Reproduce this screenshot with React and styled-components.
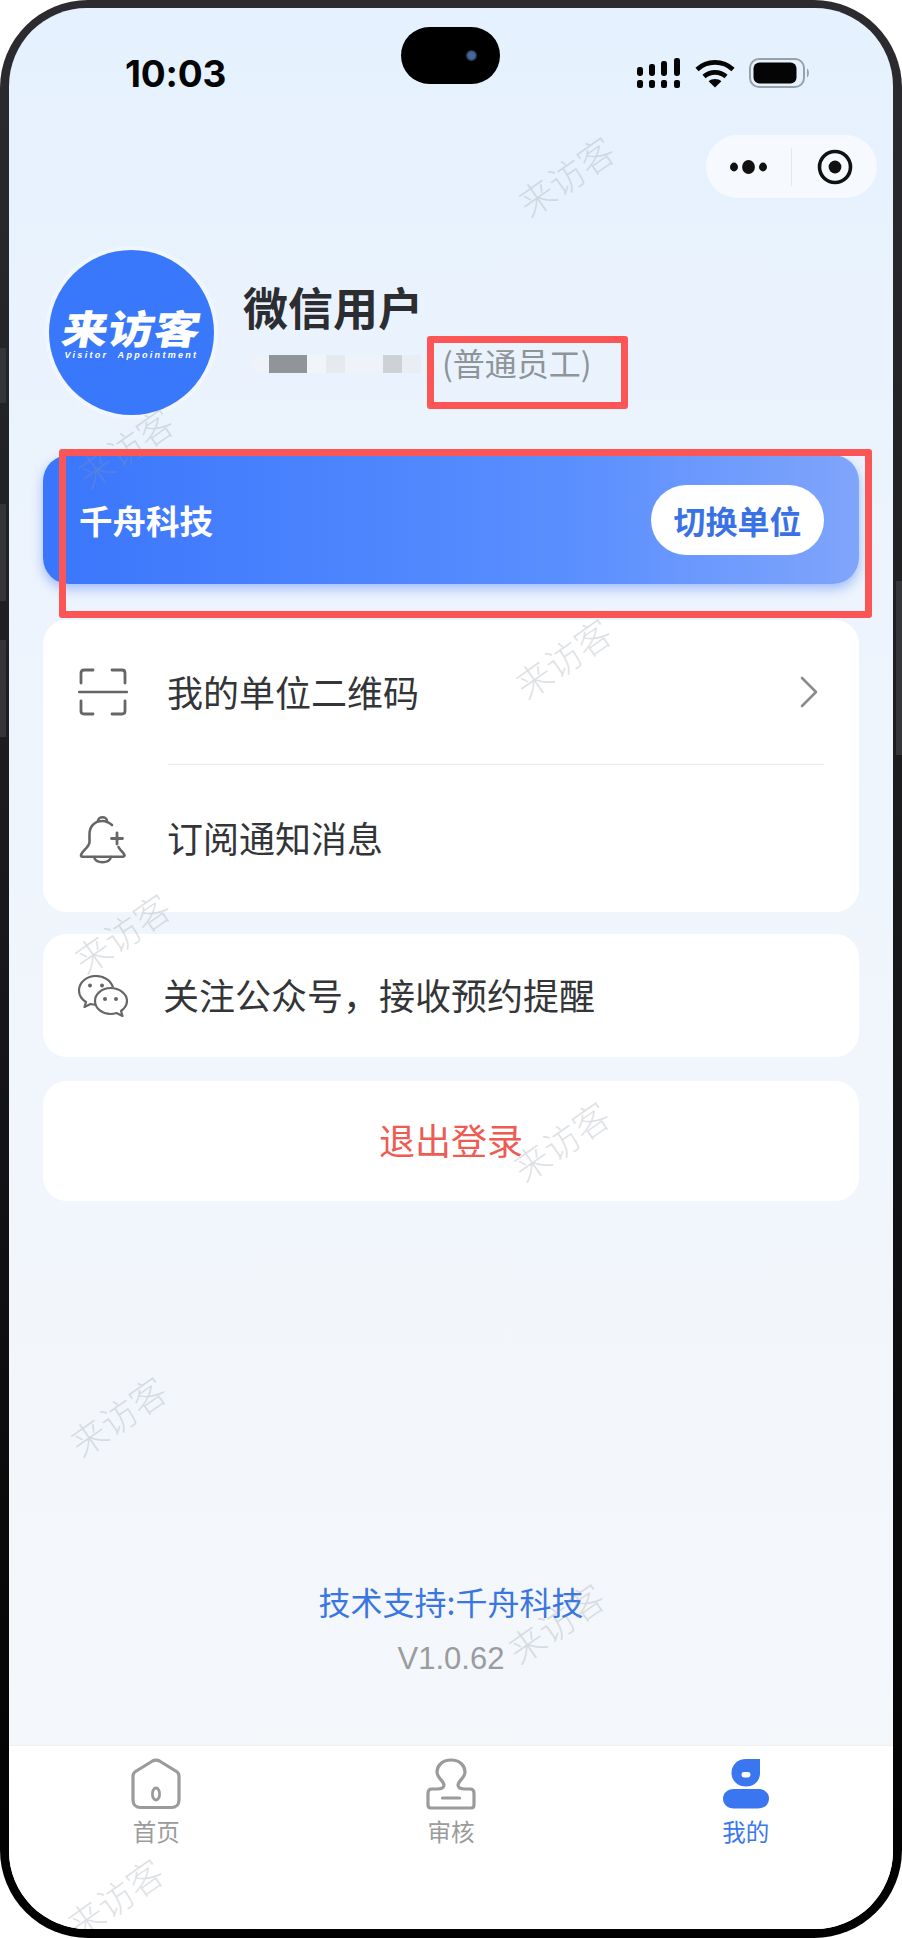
import React from 'react';
import styled, { createGlobalStyle } from 'styled-components';

const CJK = `"Noto Sans CJK SC", "Noto Sans", sans-serif`;

const GlobalStyle = createGlobalStyle`
  html, body { margin: 0; padding: 0; background: #fff; }
  * { box-sizing: border-box; }
`;

const Page = styled.div`
  position: relative;
  width: 902px;
  height: 1938px;
  overflow: hidden;
  font-family: ${CJK};
`;

const Frame = styled.div`
  width: 902px;
  height: 1938px;
  padding: 8px 9px 9px;
  border-radius: 88px;
  background: linear-gradient(180deg, #2c2c30 0%, #1c1c1f 40%, #000 100%);
`;

const SideButton = styled.div`
  position: absolute;
  top: ${(p) => p.$y}px;
  ${(p) => (p.$right ? 'right: 0;' : 'left: 0;')}
  width: 6px;
  height: ${(p) => p.$h}px;
  background: #343538;
`;

const Screen = styled.div`
  position: relative;
  display: flex;
  flex-direction: column;
  height: 100%;
  overflow: hidden;
  border-radius: 78px;
  background: linear-gradient(180deg, #e5f1fe 0%, #ebf3fd 22%, #f1f6fc 55%, #f5f7fa 100%);
`;

const StatusBar = styled.div`
  display: grid;
  grid-template-columns: 275px 99px 1fr;
  align-items: start;
  height: 127px;
  padding: 19px 0 0 116px;
`;

const Time = styled.div`
  margin-top: 27px;
  font-family: Inter, "Liberation Sans", sans-serif;
  font-size: 37px;
  font-weight: 700;
  line-height: 40px;
  color: #050505;
  letter-spacing: -0.2px;
`;

const Island = styled.div`
  display: flex;
  align-items: center;
  justify-content: flex-end;
  width: 99px;
  height: 57px;
  margin-left: 1px;
  padding-right: 23px;
  border-radius: 29px;
  background: #000;
`;

const Lens = styled.div`
  width: 11px;
  height: 11px;
  border-radius: 50%;
  background: radial-gradient(circle, #47689a 0 40%, #1b2238 75%);
`;

const StatusIcons = styled.div`
  display: flex;
  align-items: center;
  gap: 14px;
  margin: 31px 0 0 138px;
  height: 30px;
`;

const NavRow = styled.div`
  display: flex;
  justify-content: flex-end;
  padding-right: 16px;
`;

const Capsule = styled.div`
  display: flex;
  align-items: center;
  width: 171px;
  height: 63px;
  border-radius: 32px;
  background: rgba(255, 255, 255, 0.62);
`;

const CapsuleSlot = styled.div`
  flex: 1;
  display: flex;
  align-items: center;
  justify-content: center;
`;

const CapsuleLine = styled.div`
  width: 1px;
  height: 38px;
  background: rgba(0, 0, 0, 0.07);
`;

const Profile = styled.div`
  display: flex;
  align-items: flex-start;
  padding: 52px 0 0 40px;
  height: 257px;
`;

const Avatar = styled.div`
  display: flex;
  flex-direction: column;
  align-items: center;
  justify-content: center;
  flex: none;
  width: 165px;
  height: 165px;
  padding-bottom: 0;
  border-radius: 50%;
  background: #3a78fb;
  box-shadow: 0 0 0 4px rgba(255, 255, 255, 0.35);
  color: #fff;
`;

const LogoText = styled.div`
  font-size: 46px;
  font-weight: 900;
  line-height: 44px;
  transform: skewX(-10deg) scaleY(0.86);
`;

const LogoSub = styled.div`
  margin-top: 1px;
  font-family: "Liberation Sans", sans-serif;
  font-size: 9px;
  font-style: italic;
  font-weight: 700;
  line-height: 10px;
  letter-spacing: 2.3px;
  white-space: pre;
`;

const UserInfo = styled.div`
  display: flex;
  flex-direction: column;
  margin-left: 29px;
  padding-top: 29px;
`;

const UserName = styled.div`
  font-size: 45px;
  font-weight: 700;
  line-height: 56px;
  color: #2b2d30;
`;

const RoleRow = styled.div`
  display: flex;
  align-items: center;
  height: 44px;
  margin-top: 5px;
  padding-left: 7px;
`;

const Mosaic = styled.div`
  display: flex;
  width: 192px;
  height: 18px;
  margin-top: 4px;
`;

const MosaicCell = styled.div`
  width: 19px;
  height: 18px;
  background: ${(p) => p.$shade};
`;

const Role = styled.span`
  font-size: 32px;
  line-height: 44px;
  color: #8f9498;
`;

const Content = styled.div`
  display: flex;
  flex: 1;
  flex-direction: column;
  padding: 0 34px;
`;

const CompanyCard = styled.div`
  display: flex;
  align-items: center;
  justify-content: space-between;
  height: 129px;
  padding: 0 35px 0 36px;
  border-radius: 26px;
  background: linear-gradient(90deg, #3a76fc 0%, #5a8fff 65%, #80a5fb 100%);
  box-shadow: 0 5px 12px rgba(70, 120, 250, 0.45);
`;

const CompanyName = styled.div`
  font-size: 33.5px;
  font-weight: 700;
  color: #fff;
`;

const SwitchButton = styled.button`
  width: 173px;
  height: 70px;
  border: 0;
  border-radius: 35px;
  background: #fff;
  font-family: inherit;
  font-size: 32px;
  font-weight: 700;
  color: #3a72e6;
`;

const Card = styled.div`
  margin-top: ${(p) => p.$top}px;
  border-radius: 24px;
  background: #fff;
`;

const Row = styled.div`
  display: flex;
  align-items: center;
  height: ${(p) => p.$height}px;
  padding: 0 40px 0 35px;
  gap: ${(p) => p.$gap}px;
`;

const RowIcon = styled.div`
  display: flex;
  flex: none;
  width: 50px;
  justify-content: center;
`;

const RowLabel = styled.div`
  flex: 1;
  margin-top: -3px;
  font-size: 36px;
  line-height: 48px;
  color: #333538;
`;

const Divider = styled.div`
  height: 1px;
  margin: 0 35px 0 125px;
  background: #e9eaec;
`;

const LogoutRow = styled.div`
  display: flex;
  align-items: center;
  justify-content: center;
  height: 120px;
  padding-bottom: 4px;
  font-size: 36px;
  color: #ee5b52;
`;

const Footer = styled.div`
  display: flex;
  flex-direction: column;
  align-items: center;
  margin-top: auto;
  padding-bottom: 63px;
`;

const Support = styled.div`
  font-size: 32px;
  line-height: 46px;
  color: #3a76e2;
`;

const Version = styled.div`
  margin-top: 12px;
  font-family: "Liberation Sans", sans-serif;
  font-size: 31px;
  line-height: 46px;
  color: #9a9c9f;
`;

const TabBar = styled.div`
  display: grid;
  grid-template-columns: repeat(3, 1fr);
  height: 184px;
  padding-top: 12px;
  background: #fff;
  border-top: 1px solid #f0f0f0;
`;

const Tab = styled.div`
  display: flex;
  flex-direction: column;
  align-items: center;
  color: ${(p) => (p.$active ? '#3a76f0' : '#9b9b9b')};
`;

const TabIcon = styled.div`
  display: flex;
  height: 52px;
`;

const TabLabel = styled.div`
  margin-top: 4px;
  font-size: 23.5px;
  line-height: 34px;
`;

const Watermark = styled.div`
  position: absolute;
  left: ${(p) => p.$x}px;
  top: ${(p) => p.$y}px;
  width: 120px;
  margin: -24px 0 0 -60px;
  font-size: 36px;
  font-weight: 300;
  line-height: 48px;
  text-align: center;
  color: rgba(140, 150, 160, 0.28);
  transform: rotate(-35deg);
  pointer-events: none;
`;

const Annotation = styled.div`
  position: absolute;
  left: ${(p) => p.$x}px;
  top: ${(p) => p.$y}px;
  width: ${(p) => p.$w}px;
  height: ${(p) => p.$h}px;
  border: 7px solid #fb5556;
  border-radius: 3px;
  pointer-events: none;
`;

const SignalIcon = () => (
  <svg width="44" height="30" viewBox="0 0 44 30" fill="#050505">
    <rect x="0" y="9" width="6" height="9" rx="2.4" />
    <rect x="12" y="6" width="6" height="12" rx="2.4" />
    <rect x="24" y="3" width="6" height="15" rx="2.4" />
    <rect x="37" y="0" width="6" height="18" rx="2.4" />
    <rect x="0" y="22" width="6" height="8" rx="2.2" />
    <rect x="12" y="22" width="6" height="8" rx="2.2" />
    <rect x="24" y="22" width="6" height="8" rx="2.2" />
    <rect x="37" y="22" width="6" height="8" rx="2.2" />
  </svg>
);

const WifiIcon = () => (
  <svg width="40" height="29" viewBox="0 0 40 29" fill="none" stroke="#050505" strokeWidth="4.6">
    <path d="M2 10.5C12 1 28 1 38 10.5" />
    <path d="M9 17.5C15 12 25 12 31 17.5" />
    <path d="M20 28.5L13.6 22.2C17 19.4 23 19.4 26.4 22.2Z" fill="#050505" stroke="none" />
  </svg>
);

const BatteryIcon = () => (
  <svg width="62" height="30" viewBox="0 0 62 30">
    <rect x="1" y="1" width="54" height="28" rx="9" fill="none" stroke="#98a0a8" strokeWidth="2" />
    <rect x="4.5" y="4.5" width="43" height="21" rx="6" fill="#050505" />
    <path d="M58 10.5C60.5 11.5 60.5 18.5 58 19.5Z" fill="#98a0a8" />
  </svg>
);

const MoreIcon = () => (
  <svg width="40" height="16" viewBox="0 0 40 16" fill="#111">
    <ellipse cx="5" cy="8" rx="4" ry="4.4" />
    <ellipse cx="19.5" cy="8" rx="6.4" ry="7" />
    <ellipse cx="34" cy="8" rx="4" ry="4.4" />
  </svg>
);

const TargetIcon = () => (
  <svg width="36" height="36" viewBox="0 0 36 36">
    <circle cx="18" cy="18" r="15.5" fill="none" stroke="#111" strokeWidth="3.6" />
    <circle cx="18" cy="18" r="6.4" fill="#111" />
  </svg>
);

const ScanIcon = () => (
  <svg width="50" height="48" viewBox="0 0 50 48" fill="none" stroke="#666" strokeWidth="2.8" strokeLinecap="round">
    <path d="M3 15V5Q3 2 6 2H15" />
    <path d="M34 2H44Q47 2 47 5V15" />
    <path d="M1 24H49" strokeWidth="2.4" />
    <path d="M3 33V43Q3 46 6 46H15" />
    <path d="M34 46H44Q47 46 47 43V33" />
  </svg>
);

const BellIcon = () => (
  <svg width="48" height="50" viewBox="0 0 48 50" fill="none" stroke="#666" strokeWidth="2.6" strokeLinecap="round" strokeLinejoin="round">
    <path d="M33 11C30 8.5 27 7 23.5 7C15 7 10.5 13 10.5 20V28C10.5 33 3 37 2 41C1.7 42.5 3 42.8 4 42.8H43.5C45 42.8 46 42 45.3 40.6C44 38 41 36 39.5 33" />
    <path d="M19 7C19 2 28 2 28 7" />
    <path d="M15 43C17 50 30 50 32 43" />
    <path d="M38 19V30M32.5 24.5H43.5" strokeWidth="2.8" />
  </svg>
);

const ChatIcon = () => (
  <svg width="50" height="42" viewBox="0 0 50 42" fill="none" stroke="#666" strokeWidth="2.2" strokeLinejoin="round">
    <path d="M35 12.5C33 5.5 26 1 18 1C8.5 1 1 7.5 1 15.5C1 20.5 4 24.5 8 27L6.5 32L12.5 29C14 29.4 15.5 29.7 18 29.8" />
    <path d="M32.5 13C41.5 13 49 19 49 26C49 30.5 46.5 33.5 43 36L44.5 41L38.5 38C36.5 38.6 34.5 39 32.5 39C24 39 17 33.2 17 26C17 19 24 13 32.5 13Z" />
    <circle cx="12" cy="10.5" r="2" fill="#666" stroke="none" />
    <circle cx="24" cy="10.5" r="2" fill="#666" stroke="none" />
    <circle cx="27" cy="24" r="2" fill="#666" stroke="none" />
    <circle cx="38" cy="24" r="2" fill="#666" stroke="none" />
  </svg>
);

const ChevronIcon = () => (
  <svg width="20" height="32" viewBox="0 0 20 32" fill="none" stroke="#8b8b8b" strokeWidth="2.6" strokeLinecap="round" strokeLinejoin="round">
    <path d="M3 2L17 16L3 30" />
  </svg>
);

const HomeIcon = () => (
  <svg width="50" height="52" viewBox="0 0 50 52" fill="none" stroke="currentColor" strokeWidth="3.2" strokeLinejoin="round">
    <path d="M21.5 3L4.5 13.5C2.8 14.6 2 16 2 18V42C2 46.5 5 49.5 9.5 49.5H40.5C45 49.5 48 46.5 48 42V18C48 16 47.2 14.6 45.5 13.5L28.5 3C26 1.6 24 1.6 21.5 3Z" />
    <ellipse cx="25" cy="36" rx="3.6" ry="6" strokeWidth="2.8" />
  </svg>
);

const StampIcon = () => (
  <svg width="50" height="52" viewBox="0 0 50 52" fill="none" stroke="currentColor" strokeWidth="3.2" strokeLinejoin="round">
    <path d="M25 2C16 2 11 8 11 14C11 20 18 23 18 27C18 30 15 31 11 31H6C3.5 31 2 32.5 2 35V47C2 49 3 50 5 50H45C47 50 48 49 48 47V35C48 32.5 46.5 31 44 31H39C35 31 32 30 32 27C32 23 39 20 39 14C39 8 34 2 25 2Z" />
    <path d="M16.5 40H33.5" strokeLinecap="round" />
  </svg>
);

const MineIcon = () => (
  <svg width="48" height="52" viewBox="0 0 48 52">
    <path d="M38 1V15C38 23 32 28.5 24 28.5C16 28.5 9.5 23 9.5 15C9.5 7 15.5 1 24 1Z" fill="currentColor" />
    <rect x="19.5" y="14" width="9" height="5.4" rx="2.4" fill="#fff" />
    <path d="M12 31H36C43 31 47 35.5 47 40.5C47 46 43 50.5 36 50.5H12C5 50.5 1 46 1 40.5C1 35.5 5 31 12 31Z" fill="currentColor" />
  </svg>
);

const mosaicShades = [
  '#eef3f9', '#8f9599', '#8f9599', '#f0f5fa', '#e5eaee', '#edf3f8', '#edf3f8', '#ccd2d5', '#e8eef4', '#edf3f9',
];

// positions relative to the screen, the frame clips the last one
const watermarks = [
  [556, 167], [115, 439], [553, 649], [112, 924], [551, 1132], [108, 1407], [546, 1614], [105, 1889],
];

const tabs = [
  { label: '首页', icon: <HomeIcon /> },
  { label: '审核', icon: <StampIcon /> },
  { label: '我的', icon: <MineIcon />, active: true },
];

export default function App() {
  return (
    <Page>
      <GlobalStyle />
      <Frame>
        <Screen>
          <StatusBar>
            <Time>10:03</Time>
            <Island><Lens /></Island>
            <StatusIcons>
              <SignalIcon />
              <WifiIcon />
              <BatteryIcon />
            </StatusIcons>
          </StatusBar>
          <NavRow>
            <Capsule>
              <CapsuleSlot><MoreIcon /></CapsuleSlot>
              <CapsuleLine />
              <CapsuleSlot><TargetIcon /></CapsuleSlot>
            </Capsule>
          </NavRow>
          <Profile>
            <Avatar>
              <LogoText>来访客</LogoText>
              <LogoSub>Visitor  Appointment</LogoSub>
            </Avatar>
            <UserInfo>
              <UserName>微信用户</UserName>
              <RoleRow>
                <Mosaic>
                  {mosaicShades.map((c, i) => <MosaicCell key={i} $shade={c} />)}
                </Mosaic>
                <Role>(普通员工)</Role>
              </RoleRow>
            </UserInfo>
          </Profile>
          <Content>
            <CompanyCard>
              <CompanyName>千舟科技</CompanyName>
              <SwitchButton>切换单位</SwitchButton>
            </CompanyCard>
            <Card $top={36}>
              <Row $height={144} $gap={39}>
                <RowIcon><ScanIcon /></RowIcon>
                <RowLabel>我的单位二维码</RowLabel>
                <ChevronIcon />
              </Row>
              <Divider />
              <Row $height={147} $gap={39}>
                <RowIcon><BellIcon /></RowIcon>
                <RowLabel>订阅通知消息</RowLabel>
              </Row>
            </Card>
            <Card $top={22}>
              <Row $height={123} $gap={35}>
                <RowIcon><ChatIcon /></RowIcon>
                <RowLabel>关注公众号，接收预约提醒</RowLabel>
              </Row>
            </Card>
            <Card $top={24}>
              <LogoutRow>退出登录</LogoutRow>
            </Card>
            <Footer>
              <Support>技术支持:千舟科技</Support>
              <Version>V1.0.62</Version>
            </Footer>
          </Content>
          <TabBar>
            {tabs.map((t) => (
              <Tab key={t.label} $active={t.active}>
                <TabIcon>{t.icon}</TabIcon>
                <TabLabel>{t.label}</TabLabel>
              </Tab>
            ))}
          </TabBar>
          {watermarks.map(([x, y]) => <Watermark key={y} $x={x} $y={y}>来访客</Watermark>)}
        </Screen>
      </Frame>
      <SideButton $y={348} $h={55} />
      <SideButton $y={504} $h={97} />
      <SideButton $y={640} $h={97} />
      <SideButton $right $y={581} $h={174} />
      <Annotation $x={427} $y={336} $w={201} $h={73} />
      <Annotation $x={59} $y={449} $w={813} $h={169} />
    </Page>
  );
}
